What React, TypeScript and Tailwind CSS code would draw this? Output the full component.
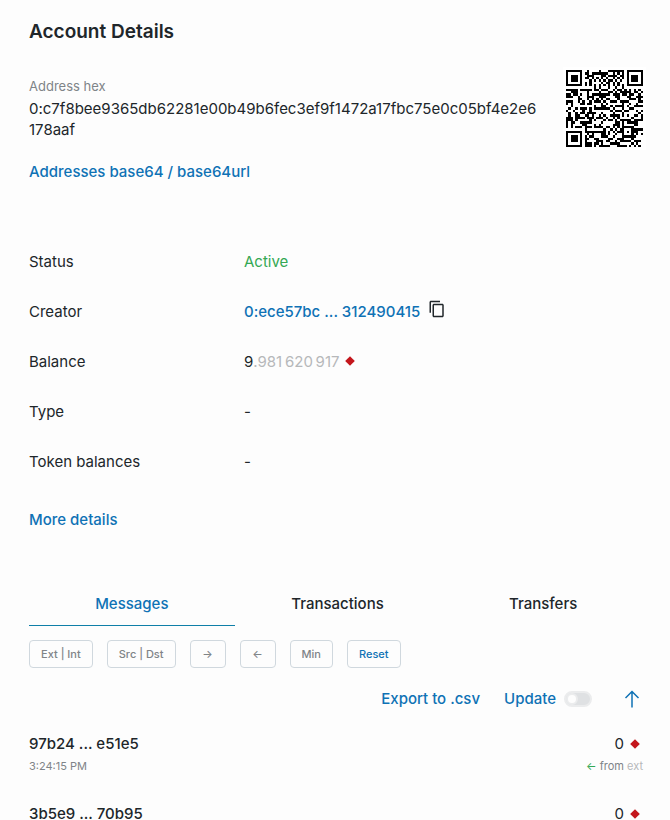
import { ReactNode } from 'react';

const ADDRESS = '0:c7f8bee9365db62281e00b49b6fec3ef9f1472a17fbc75e0c05bf4e2e6178aaf';

// QR version 4, level L: 33 modules, 80 data codewords + 20 for error correction
const QR_SIZE = 33;
const DATA_LEN = 80;
const EC_LEN = 20;

const FORMAT_BITS = [0x77c4, 0x72f3, 0x7daa, 0x789d, 0x662f, 0x6318, 0x6c41, 0x6976];

const MASKS: ((r: number, c: number) => boolean)[] = [
  (r, c) => (r + c) % 2 === 0,
  (r) => r % 2 === 0,
  (_r, c) => c % 3 === 0,
  (r, c) => (r + c) % 3 === 0,
  (r, c) => (Math.floor(r / 2) + Math.floor(c / 3)) % 2 === 0,
  (r, c) => ((r * c) % 2) + ((r * c) % 3) === 0,
  (r, c) => (((r * c) % 2) + ((r * c) % 3)) % 2 === 0,
  (r, c) => (((r + c) % 2) + ((r * c) % 3)) % 2 === 0,
];

function gfMul(a: number, b: number) {
  let z = 0;
  for (let i = 7; i >= 0; i--) {
    z = (z << 1) ^ ((z >>> 7) * 0x11d);
    z ^= ((b >>> i) & 1) * a;
  }
  return z;
}

function errorCorrection(data: number[]) {
  const gen = new Array(EC_LEN).fill(0);
  gen[EC_LEN - 1] = 1;
  let root = 1;
  for (let i = 0; i < EC_LEN; i++) {
    for (let j = 0; j < EC_LEN; j++) {
      gen[j] = gfMul(gen[j], root);
      if (j + 1 < EC_LEN) gen[j] ^= gen[j + 1];
    }
    root = gfMul(root, 2);
  }
  const rem = new Array(EC_LEN).fill(0);
  for (const b of data) {
    const factor = b ^ rem.shift();
    rem.push(0);
    gen.forEach((g, i) => (rem[i] ^= gfMul(g, factor)));
  }
  return rem;
}

function encode(text: string) {
  const hex = (n: number) => n.toString(16).padStart(2, '0');
  const body = '4' + hex(text.length) + [...text].map((ch) => hex(ch.charCodeAt(0))).join('') + '0';
  const data: number[] = [];
  for (let i = 0; i < body.length; i += 2) data.push(parseInt(body.slice(i, i + 2), 16));
  for (let pad = 0xec; data.length < DATA_LEN; pad ^= 0xec ^ 0x11) data.push(pad);
  return [...data, ...errorCorrection(data)];
}

function qrMatrix(text: string, mask: number) {
  const m: (boolean | null)[][] = Array.from({ length: QR_SIZE }, () => new Array(QR_SIZE).fill(null));

  // timing lines, finders, alignment square
  for (let i = 0; i < QR_SIZE; i++) {
    m[6][i] = i % 2 === 0;
    m[i][6] = i % 2 === 0;
  }
  for (const [cr, cc] of [[3, 3], [3, QR_SIZE - 4], [QR_SIZE - 4, 3]]) {
    for (let dr = -4; dr <= 4; dr++) {
      for (let dc = -4; dc <= 4; dc++) {
        const d = Math.max(Math.abs(dr), Math.abs(dc));
        if (m[cr + dr] && cc + dc >= 0 && cc + dc < QR_SIZE) m[cr + dr][cc + dc] = d !== 2 && d !== 4;
      }
    }
  }
  for (let dr = -2; dr <= 2; dr++) {
    for (let dc = -2; dc <= 2; dc++) m[26 + dr][26 + dc] = Math.max(Math.abs(dr), Math.abs(dc)) !== 1;
  }

  const bit = (i: number) => ((FORMAT_BITS[mask] >>> i) & 1) === 1;
  for (let i = 0; i <= 5; i++) m[i][8] = bit(i);
  m[7][8] = bit(6);
  m[8][8] = bit(7);
  m[8][7] = bit(8);
  for (let i = 9; i < 15; i++) m[8][14 - i] = bit(i);
  for (let i = 0; i < 8; i++) m[8][QR_SIZE - 1 - i] = bit(i);
  for (let i = 8; i < 15; i++) m[QR_SIZE - 15 + i][8] = bit(i);
  m[QR_SIZE - 8][8] = true;

  const words = encode(text);
  let n = 0;
  for (let right = QR_SIZE - 1; right >= 1; right -= 2) {
    if (right === 6) right = 5;
    const up = ((right + 1) & 2) === 0;
    for (let v = 0; v < QR_SIZE; v++) {
      const r = up ? QR_SIZE - 1 - v : v;
      for (const c of [right, right - 1]) {
        if (m[r][c] !== null) continue;
        const dark = n < words.length * 8 && ((words[n >>> 3] >>> (7 - (n & 7))) & 1) === 1;
        m[r][c] = dark !== MASKS[mask](r, c);
        n++;
      }
    }
  }
  return m.map((row) => row.map((v) => v === true));
}

function penalty(m: boolean[][]) {
  const rows = m.map((row) => row.map(Number).join(''));
  const cols = m.map((_, c) => m.map((row) => Number(row[c])).join(''));
  let score = 0;
  for (const line of [...rows, ...cols]) {
    for (const run of line.match(/0{5,}|1{5,}/g) ?? []) score += run.length - 2;
    const padded = `0000${line}0000`;
    for (let i = 0; i + 11 <= padded.length; i++) {
      const part = padded.slice(i, i + 11);
      if (part === '00001011101' || part === '10111010000') score += 40;
    }
  }
  for (let r = 1; r < QR_SIZE; r++) {
    for (let c = 1; c < QR_SIZE; c++) {
      if (m[r][c] === m[r - 1][c] && m[r][c] === m[r][c - 1] && m[r][c] === m[r - 1][c - 1]) score += 3;
    }
  }
  const total = QR_SIZE * QR_SIZE;
  const dark = m.flat().filter(Boolean).length;
  return score + 10 * (Math.ceil(Math.abs(dark * 20 - total * 10) / total) - 1);
}

function bestMatrix(text: string) {
  const all = MASKS.map((_, mask) => qrMatrix(text, mask));
  return all.reduce((best, m) => (penalty(m) < penalty(best) ? m : best));
}

const QrCode = ({ text }: { text: string }) => {
  const path = bestMatrix(text)
    .flatMap((row, r) => row.map((dark, c) => (dark ? `M${c} ${r}h1v1h-1z` : '')))
    .join('');
  return (
    <svg className="size-[77px]" viewBox="0 0 33 33" shapeRendering="crispEdges" role="img" aria-label="QR code">
      <path d={path} />
    </svg>
  );
};

const Gem = () => (
  <svg className="size-3 shrink-0 text-[#c4161c]" viewBox="0 0 12 12" fill="currentColor" aria-hidden="true">
    <path d="M6 1.2 10.8 6 6 10.8 1.2 6z" />
  </svg>
);

const CopyIcon = () => (
  <svg className="size-[18px]" viewBox="0 0 24 24" fill="currentColor" aria-hidden="true">
    <path d="M16 1H4c-1.1 0-2 .9-2 2v14h2V3h12V1zm3 4H8c-1.1 0-2 .9-2 2v14c0 1.1.9 2 2 2h11c1.1 0 2-.9 2-2V7c0-1.1-.9-2-2-2zm0 16H8V7h11v14z" />
  </svg>
);

const ArrowUp = () => (
  <svg
    className="h-[18px] w-4"
    viewBox="0 0 16 18"
    fill="none"
    stroke="currentColor"
    strokeWidth="1.5"
    aria-hidden="true"
  >
    <path d="M8 17.5V1.5M1.5 8 8 1.5 14.5 8" />
  </svg>
);

const Row = ({ label, children }: { label: string; children: ReactNode }) => (
  <div className="flex h-[50px] items-center">
    <dt className="w-[215px] shrink-0">{label}</dt>
    <dd className="flex items-center">{children}</dd>
  </div>
);

const tabs = ['Messages', 'Transactions', 'Transfers'];

const filters = [
  { text: 'Ext | Int' },
  { text: 'Src | Dst' },
  { text: '→', label: 'Outgoing' },
  { text: '←', label: 'Incoming' },
  { text: 'Min' },
];

const messages = [
  { id: '97b24 ... e51e5', time: '3:24:15 PM', value: 0, from: 'ext' },
  { id: '3b5e9 ... 70b95', value: 0 },
];

export default function App() {
  return (
    <main className="min-h-screen bg-[#fdfdfd] pr-6 pl-[29px] font-['Inter',sans-serif] text-[15px] leading-[21px] text-[#20262a]">
      <h1 className="pt-5 text-[19px] leading-6 font-semibold">Account Details</h1>

      <section className="mt-[23px] flex items-start justify-between">
        <div className="min-w-0 flex-1 pt-[9px]">
          <p className="text-[13px] text-[#7f8488]">Address hex</p>
          <p className="mt-px break-all">{ADDRESS}</p>
          <a href="#" className="mt-[21px] inline-block font-medium text-[#0f72b5]">
            Addresses base64 / base64url
          </a>
        </div>
        <div className="ml-6 bg-white p-[3px]">
          <QrCode text={ADDRESS} />
        </div>
      </section>

      <dl className="mt-[54px]">
        <Row label="Status">
          <span className="text-[#34a853]">Active</span>
        </Row>
        <Row label="Creator">
          <a href="#" className="font-medium text-[#0f72b5]">0:ece57bc ... 312490415</a>
          <button type="button" aria-label="Copy address" className="mb-1 ml-2">
            <CopyIcon />
          </button>
        </Row>
        <Row label="Balance">
          9<span className="mr-[5px] text-[#b6b8ba]">.981&#8201;620&#8201;917</span>
          <Gem />
        </Row>
        <Row label="Type">-</Row>
        <Row label="Token balances">-</Row>
      </dl>
      <a href="#" className="mt-[23px] inline-block font-medium text-[#0f72b5]">More details</a>

      <div role="tablist" className="mt-[52px] grid grid-cols-3 font-medium">
        {tabs.map((tab, i) => (
          <button
            key={tab}
            type="button"
            role="tab"
            aria-selected={i === 0}
            className="h-11 border-b border-transparent aria-selected:border-[#0f7fa8] aria-selected:text-[#0f72b5]"
          >
            {tab}
          </button>
        ))}
      </div>

      <div className="mt-3.5 flex gap-3.5 text-[11px] font-medium text-[#7f8488]">
        {filters.map((f) => (
          <button
            key={f.text}
            type="button"
            aria-label={f.label}
            className="h-7 min-w-9 rounded border border-[#d0d8de] px-[11px]"
          >
            {f.text}
          </button>
        ))}
        <button type="button" className="h-7 rounded border border-[#d0d8de] px-[11px] text-[#0f72b5]">
          Reset
        </button>
      </div>

      <div className="mt-5 mr-1.5 flex items-center justify-end font-medium text-[#0f72b5]">
        <button type="button">Export to .csv</button>
        <label className="ml-6 flex items-center gap-2">
          Update
          <input
            type="checkbox"
            className="h-4 w-7 appearance-none rounded-full border-2 border-[#ebeced] bg-[#dfe1e3] before:block before:size-3 before:rounded-full before:border-2 before:border-[#ebeced] before:bg-[#fdfdfd]"
          />
        </label>
        <button type="button" aria-label="Scroll to top" className="ml-8">
          <ArrowUp />
        </button>
      </div>

      <ul className="mt-6 mr-[3px]">
        {messages.map((msg) => (
          <li key={msg.id} className="flex justify-between not-last:pb-[26px]">
            <div>
              <p className="font-medium">{msg.id}</p>
              {msg.time && <p className="mt-0.5 text-[11px] text-[#7f8488]">{msg.time}</p>}
            </div>
            <div>
              <p className="flex items-center justify-end gap-[5px] pr-0.5">
                {msg.value}
                <Gem />
              </p>
              {msg.from && (
                <p className="mt-0.5 text-[11px] text-[#7f8488]">
                  <span className="text-[#34a853]">←</span> from <span className="text-[#b6b8ba]">{msg.from}</span>
                </p>
              )}
            </div>
          </li>
        ))}
      </ul>
    </main>
  );
}
